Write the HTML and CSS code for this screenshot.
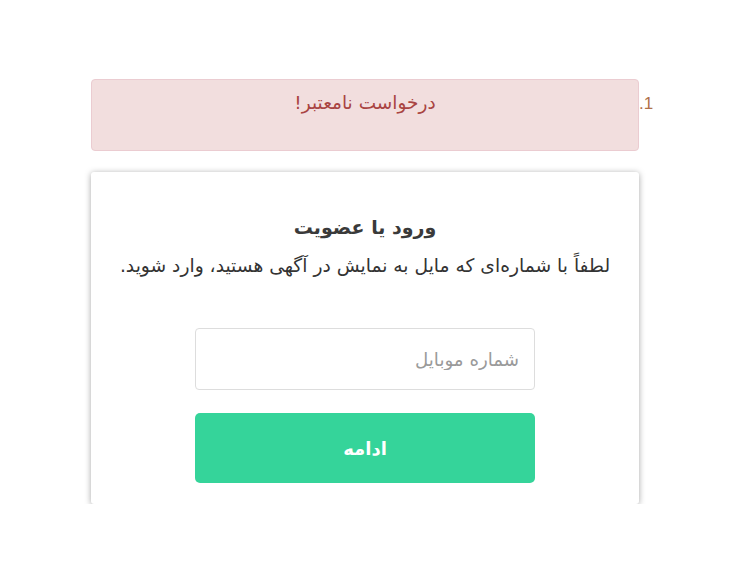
FILE: index.html
```html
<!DOCTYPE html>
<html lang="fa" dir="rtl">
<head>
<meta charset="utf-8">
<title>ورود یا عضویت</title>
<link rel="stylesheet" href="styles.css">
</head>
<body>
<div class="page">
  <ol class="errors">
    <li class="alert">درخواست نامعتبر!</li>
  </ol>
  <div class="card">
    <h2 class="title">ورود یا عضویت</h2>
    <p class="subtitle">لطفاً با شماره‌ای که مایل به نمایش در آگهی هستید، وارد شوید.</p>
    <form class="form">
      <input class="field" type="text" placeholder="شماره موبایل">
      <button class="submit" type="button">ادامه</button>
    </form>
  </div>
</div>
</body>
</html>
```

FILE: styles.css
```css
html, body {
  margin: 0;
  padding: 0;
  background: #fff;
}
body {
  font-family: "DejaVu Sans", "Noto Sans", sans-serif;
  color: #333;
  font-size: 16px;
}
.page {
  width: 548px;
  margin: 79px 102px 0 auto;
}
.errors {
  margin: 0 0 21px 0;
  padding: 0;
  color: #a94442;
}
.alert {
  background: #f2dede;
  border: 1px solid #ebccd1;
  border-radius: 4px;
  padding: 10px 15px 34px;
  line-height: 26px;
  text-align: center;
  font-size: 18.5px;
}
.alert::marker {
  content: "1.";
  font-family: "Liberation Sans", sans-serif;
  font-size: 17px;
  color: #b0714a;
}
.card {
  background: #fff;
  border-radius: 3px;
  box-shadow: 0 1px 6px rgba(0, 0, 0, 0.35);
  padding: 40px 104px 21px;
  text-align: center;
}
.title {
  margin: 0;
  font-size: 19px;
  font-weight: bold;
  line-height: 30px;
  color: #3a3a3a;
}
.subtitle {
  margin: 11px -80px 0;
  line-height: 26px;
  font-size: 18.7px;
  color: #333;
  white-space: nowrap;
}
.form {
  display: flex;
  flex-direction: column;
  gap: 23px;
  margin-top: 49px;
}
.field {
  height: 62px;
  box-sizing: border-box;
  border: 1px solid #ddd;
  border-radius: 4px;
  padding: 0 15px;
  font-family: inherit;
  font-size: 18.2px;
  text-align: right;
  direction: rtl;
  outline: none;
}
.field::placeholder {
  color: #9a9a9a;
}
.submit {
  height: 70px;
  border: none;
  border-radius: 5px;
  background: #35d49a;
  color: #fff;
  font-family: inherit;
  font-size: 18px;
  font-weight: bold;
}
```
